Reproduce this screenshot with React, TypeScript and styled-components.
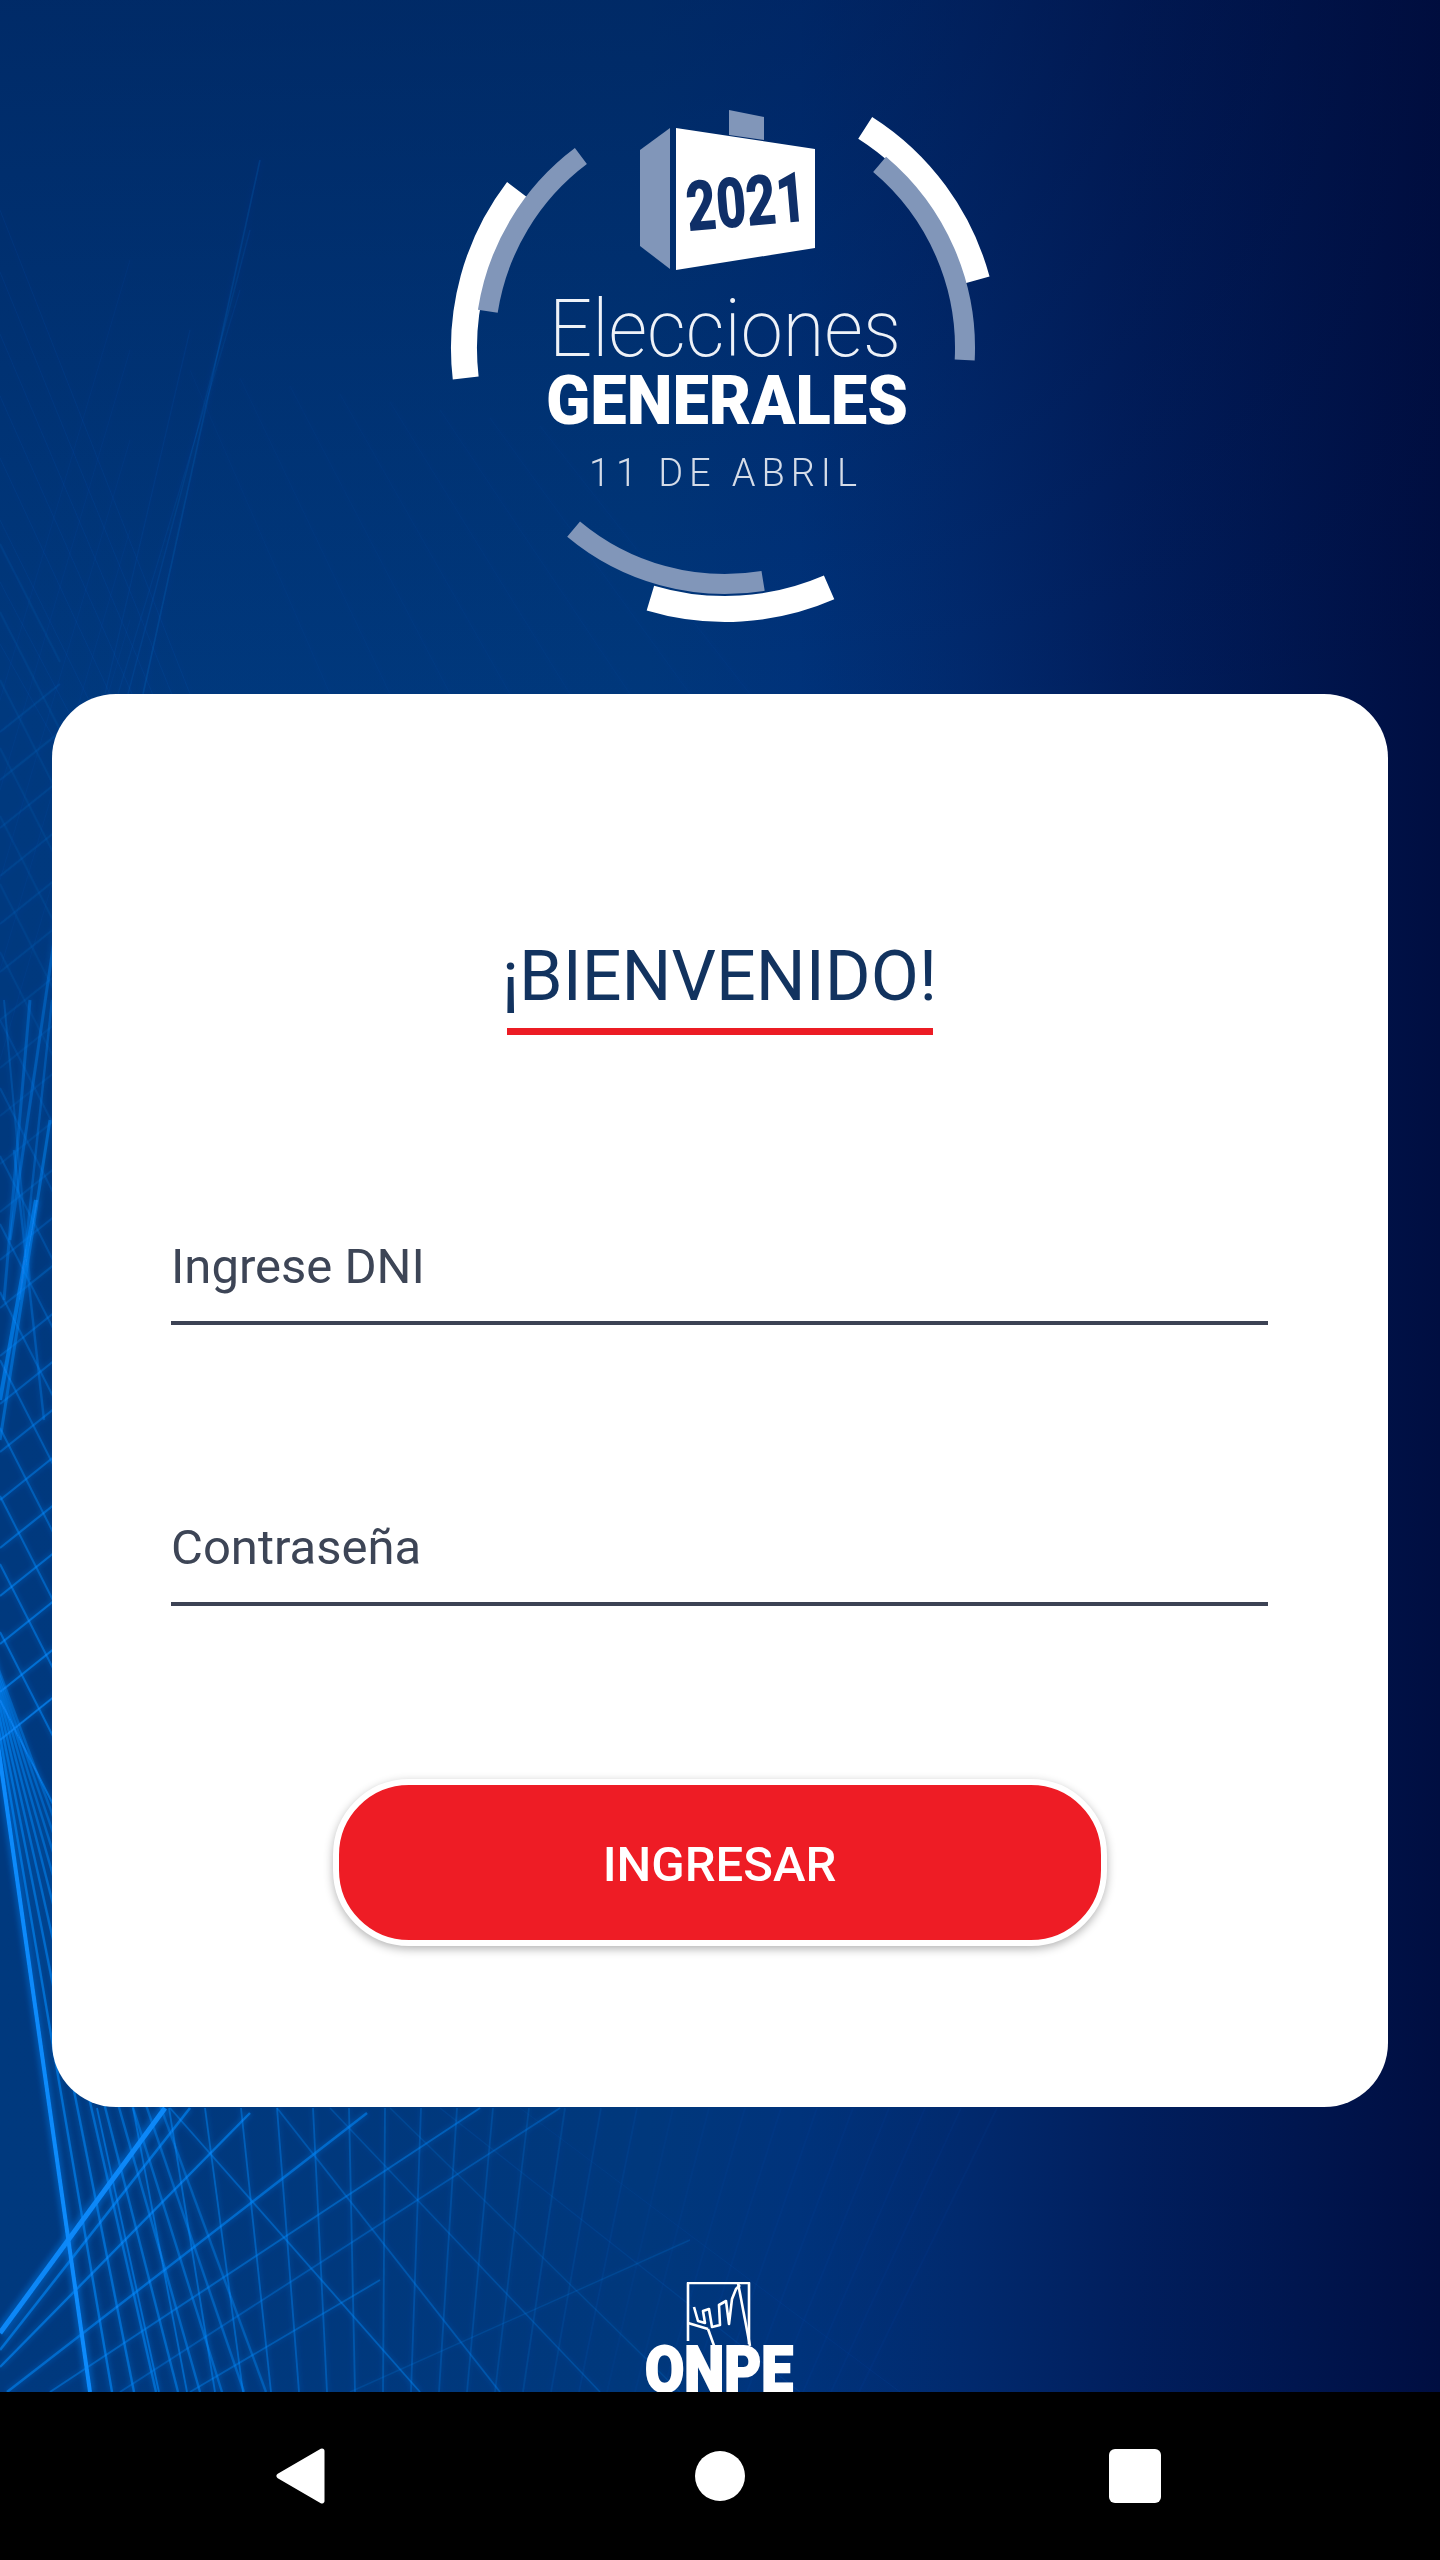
import styled, { createGlobalStyle } from "styled-components";

const GlobalStyle = createGlobalStyle`
  html, body {
    margin: 0;
    padding: 0;
    background: #000;
  }
  * {
    box-sizing: border-box;
  }
`;

const Page = styled.div`
  display: flex;
  flex-direction: column;
  width: 1440px;
  height: 2560px;
  font-family: Roboto, "Liberation Sans", sans-serif;
`;

const Screen = styled.main`
  position: relative;
  isolation: isolate;
  display: flex;
  flex-direction: column;
  align-items: center;
  height: 2392px;
  overflow: hidden;
  background:
    linear-gradient(180deg, rgba(0, 12, 56, 0.32) 0%, rgba(0, 12, 56, 0) 30%),
    linear-gradient(90deg, #00397e 0%, #00387c 45%, #00337b 55.5%, #012a6e 66.7%, #011f5e 77.8%, #00164f 90%, #000e41 100%);
`;

const Backdrop = styled.svg`
  position: absolute;
  inset: 0;
  z-index: -1;
  mix-blend-mode: screen;
`;

const Header = styled.header`
  display: flex;
  justify-content: center;
  width: 100%;
  padding-top: 80px;
  margin-bottom: 34px;
`;

const Card = styled.section`
  display: flex;
  flex-direction: column;
  align-items: center;
  width: 1336px;
  height: 1414px;
  padding: 242px 120px 0 119px;
  background: #fff;
  border-radius: 64px;
`;

const Title = styled.h1`
  margin: 0 0 204px;
  font-size: 70px;
  font-weight: 400;
  line-height: 80px;
  color: #12335f;

  &::after {
    content: "";
    display: block;
    height: 7px;
    margin: 12px 4px 0 5px;
    background: #ec1c24;
  }
`;

const Field = styled.label`
  display: block;
  width: 100%;
  margin-bottom: 195px;
  padding-bottom: 26px;
  font-size: 49px;
  line-height: 56px;
  color: #3d4556;
  border-bottom: 4px solid #3c4254;

  &:last-of-type {
    margin-bottom: 173px;
  }
`;

const SubmitButton = styled.button`
  flex: none;
  width: 774px;
  height: 167px;
  padding-top: 4px;
  font-family: inherit;
  font-size: 49px;
  font-weight: 500;
  color: #fff;
  background: #ee1c25;
  border: 6px solid #fff;
  border-radius: 76px;
  box-shadow: 0 3px 10px rgba(0, 0, 0, 0.3);
`;

const Footer = styled.footer`
  display: flex;
  justify-content: center;
  width: 100%;
  padding-top: 175px;
`;

const NavBar = styled.nav`
  display: flex;
  align-items: center;
  height: 168px;
  padding-left: 276px;
  background: #000;
`;

const BackIcon = styled.svg`
  flex: none;
`;

const HomeIcon = styled.span`
  flex: none;
  width: 50px;
  height: 50px;
  margin-left: 370px;
  background: #fff;
  border-radius: 50%;
`;

const RecentsIcon = styled.span`
  flex: none;
  width: 52px;
  height: 54px;
  margin-left: 364px;
  background: #fff;
  border-radius: 6px;
`;

type Streak = [number, number, number, number, number, number];

// bright fan coming down the left edge
const fan: Streak[] = Array.from({ length: 9 }, (_, i) => {
  const top = 20 + 8 * i;
  const bottom = 90 + 22 * i;
  const slope = (bottom - top) / 492;
  return [top - slope * 400, 1500, bottom, 2392, i === 0 ? 4 : 2.4, i === 0 ? 1 : 0.62 - i * 0.03];
});

// nearly vertical lines under the card, fading to the right
const verticals: Streak[] = Array.from({ length: 26 }, (_, i) => {
  const x = 97 + 36 * i;
  return [x, 2108, x + 62 - i * 8, 2392, 1.8, Math.max(0.04, 0.55 - i * 0.032)];
});

const risers: Streak[] = [
  [0, 2333, 165, 2108, 5, 0.95],
  [0, 2350, 190, 2108, 2.6, 0.6],
  [0, 2367, 250, 2113, 2.4, 0.6],
  [7, 2392, 367, 2113, 2.4, 0.55],
  [50, 2392, 480, 2108, 2, 0.42],
  [120, 2392, 560, 2108, 1.8, 0.3],
  [190, 2392, 380, 2280, 1.8, 0.36],
  [350, 2392, 690, 2240, 1.4, 0.16],
];

const fallers: Streak[] = [
  [170, 2108, 420, 2392, 1.8, 0.42],
  [277, 2108, 500, 2392, 1.8, 0.32],
  [330, 2108, 600, 2392, 1.6, 0.24],
  [390, 2108, 680, 2392, 1.4, 0.16],
  [440, 2108, 800, 2392, 1.2, 0.1],
  [520, 2108, 900, 2392, 1, 0.06],
];

// criss-cross running up the left margin, stronger toward the bottom
const marginUp: Streak[] = Array.from({ length: 22 }, (_, i) => {
  const y = 1740 - i * 48;
  return [0, y, 60, y - 48, 2.2, Math.max(0.1, 0.66 - i * 0.045)];
});
const marginDown: Streak[] = Array.from({ length: 18 }, (_, i) => {
  const y = 1700 - i * 68;
  return [0, y, 60, y + 118, 2, Math.max(0.08, 0.58 - i * 0.045)];
});
const marginSteep: Streak[] = [
  [36, 1200, 0, 1400, 4, 0.6],
  [50, 1120, 0, 1440, 3, 0.45],
  [60, 900, 10, 1240, 3, 0.34],
  [30, 1000, 4, 1300, 3, 0.34],
  [52, 1000, 20, 1300, 2.4, 0.3],
  [14, 1150, 44, 1420, 2.4, 0.32],
  [4, 1000, 30, 1280, 2, 0.22],
];

const upperLeft: Streak[] = [
  [260, 160, 143, 694, 1.6, 0.14],
  [250, 230, 128, 694, 1.4, 0.1],
  [240, 290, 118, 694, 1.2, 0.08],
  [190, 330, 105, 694, 1.2, 0.07],
  ...Array.from({ length: 8 }, (_, i): Streak => [0, 210 + i * 62, 190 - i * 6, 694 + i * 30, 1, 0.07]),
  ...Array.from({ length: 8 }, (_, i): Streak => [190 + i * 50, 370 + i * 8, 330 + i * 60, 694, 1, 0.04]),
  ...Array.from({ length: 5 }, (_, i): Streak => [0, 700 + i * 90, 130, 260 + i * 90, 1, 0.05]),
];

const streaks = [...verticals, ...fallers, ...risers, ...fan, ...marginUp, ...marginDown, ...marginSteep, ...upperLeft];

function Lines() {
  return (
    <Backdrop width="1440" height="2392" viewBox="0 0 1440 2392" aria-hidden="true">
      <defs>
        <filter id="glow" x="-5%" y="-5%" width="110%" height="110%">
          <feGaussianBlur stdDeviation="2.4" />
        </filter>
        <filter id="soft" x="-5%" y="-5%" width="110%" height="110%">
          <feGaussianBlur stdDeviation="0.6" />
        </filter>
      </defs>
      <g filter="url(#glow)" stroke="#0658e6" fill="none">
        {streaks.map(([x1, y1, x2, y2, width, opacity], i) => (
          <line key={i} x1={x1} y1={y1} x2={x2} y2={y2} strokeWidth={width * 2.4} strokeOpacity={opacity * 0.4} />
        ))}
      </g>
      <g filter="url(#soft)" stroke="#0a68f8" fill="none">
        {streaks.map(([x1, y1, x2, y2, width, opacity], i) => (
          <line key={i} x1={x1} y1={y1} x2={x2} y2={y2} strokeWidth={width} strokeOpacity={opacity} />
        ))}
      </g>
    </Backdrop>
  );
}

const CX = 305;
const CY = 268;

// clockwise degrees from 12 o'clock
function arc(from: number, to: number, r: number) {
  const point = (deg: number) => {
    const rad = (deg * Math.PI) / 180;
    return `${(CX + r * Math.sin(rad)).toFixed(1)} ${(CY - r * Math.cos(rad)).toFixed(1)}`;
  };
  return `M${point(from)} A${r} ${r} 0 0 1 ${point(to)}`;
}

function ElectionLogo() {
  return (
    <svg width="600" height="580" viewBox="0 0 600 580" role="img" aria-label="Elecciones Generales 2021">
      <g fill="none" stroke="#fff" strokeWidth="26">
        <path d={arc(-96.6, -52.7, 261)} />
        <path d={arc(32.5, 74.9, 261)} />
        <path d={arc(156.5, 196.6, 261)} />
      </g>
      <g fill="none" stroke="#8196b9" strokeWidth="20">
        <path d={arc(-81.2, -36.9, 240)} />
        <path d={arc(40.1, 92.9, 240)} />
        <path d={arc(170.7, 219.9, 236)} />
      </g>
      <polygon points="309,30 344,37 344,60 309,55" fill="#8196b9" />
      <polygon points="250,48 220,70 220,166 250,189" fill="#8196b9" />
      <polygon points="256,48 395,69 395,168 256,190" fill="#fff" />
      <text
        x="326"
        y="146"
        fontSize="70"
        fontWeight="900"
        fill="#0f2f68"
        textAnchor="middle"
        textLength="120"
        lengthAdjust="spacingAndGlyphs"
        transform="rotate(-5 326 122)"
      >
        2021
      </text>
      <text x="129" y="276" fontSize="80" fontWeight="200" fill="#eef2f8" textLength="352" lengthAdjust="spacingAndGlyphs">
        Elecciones
      </text>
      <text x="126" y="344" fontSize="68" fontWeight="900" fill="#fff" textLength="362" lengthAdjust="spacingAndGlyphs">
        GENERALES
      </text>
      <text x="169" y="406" fontSize="38" fontWeight="300" fill="#d5dce8" textLength="268" lengthAdjust="spacing">
        11 DE ABRIL
      </text>
    </svg>
  );
}

function OnpeLogo() {
  return (
    <svg width="160" height="110" viewBox="640 2283 160 110" role="img" aria-label="ONPE">
      <g fill="none" stroke="#fff" strokeWidth="2.6" strokeLinejoin="round" transform="translate(560 2240)">
        <polyline points="128,102 128,44 189,44 189,105" />
        <polyline points="148,90 157,115" />
        <polyline points="178,44 190,107" />
        <polyline points="134,68 138,82 145,84 143,72 149,70 152,88 160,86 159,66 166,62 169,85 172,60 176,50 180,46" />
        <line x1="128" y1="84" x2="148" y2="90" />
      </g>
      <text
        x="645"
        y="2393"
        fontSize="64"
        fontWeight="900"
        fill="#fff"
        stroke="#fff"
        strokeWidth="2"
        textLength="148"
        lengthAdjust="spacingAndGlyphs"
      >
        ONPE
      </text>
    </svg>
  );
}

export default function App() {
  return (
    <>
      <GlobalStyle />
      <Page>
        <Screen>
          <Lines />
          <Header>
            <ElectionLogo />
          </Header>
          <Card>
            <Title>¡BIENVENIDO!</Title>
            <Field>Ingrese DNI</Field>
            <Field>Contraseña</Field>
            <SubmitButton type="button">INGRESAR</SubmitButton>
          </Card>
          <Footer>
            <OnpeLogo />
          </Footer>
        </Screen>
        <NavBar>
          <BackIcon width="49" height="56" viewBox="0 0 49 56" aria-hidden="true">
            <path d="M46 3 L3 28 L46 53 Z" fill="#fff" stroke="#fff" strokeWidth="5" strokeLinejoin="round" />
          </BackIcon>
          <HomeIcon />
          <RecentsIcon />
        </NavBar>
      </Page>
    </>
  );
}
